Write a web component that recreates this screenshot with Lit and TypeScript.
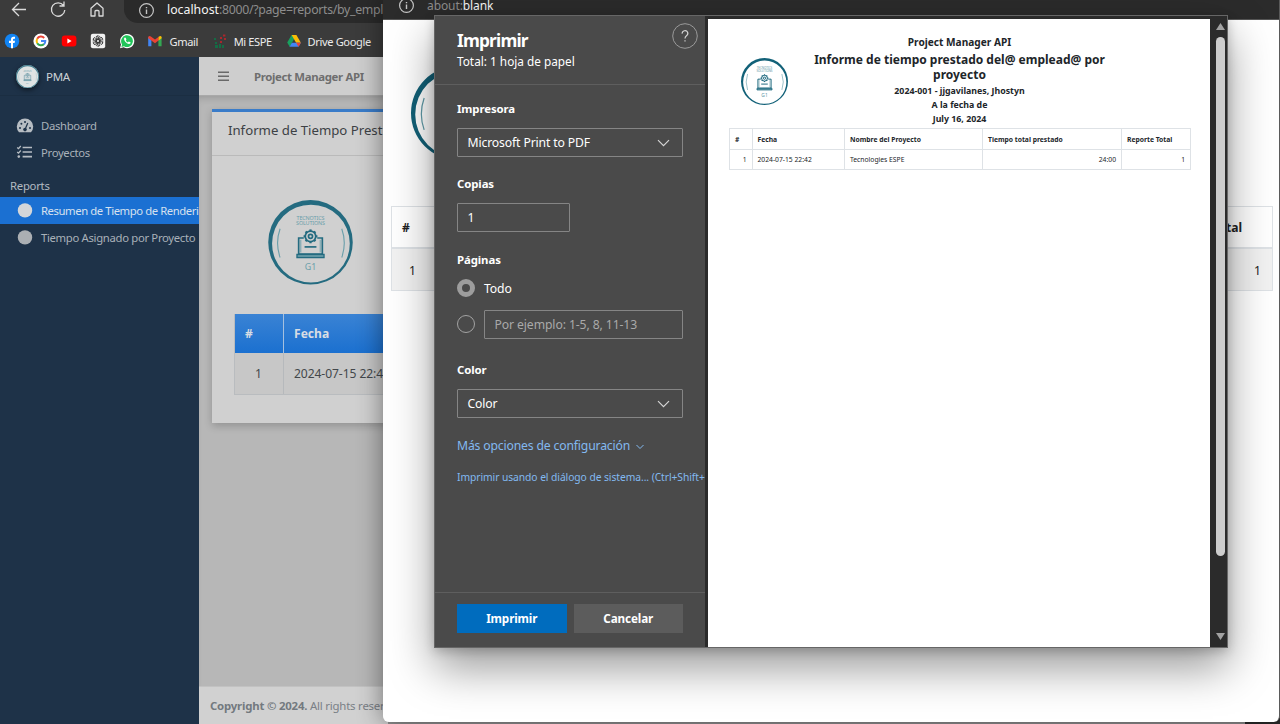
import { LitElement, html, svg, css } from "lit";
import { customElement } from "lit/decorators.js";

const base = css`
  :host { display: block; box-sizing: border-box; font-family: "Noto Sans", "Open Sans", sans-serif; }
  *, *::before, *::after { box-sizing: border-box; }
  svg { display: block; flex: none; }
  span, b { white-space: nowrap; }
`;

@customElement("team-logo")
class TeamLogo extends LitElement {
  static styles = css`
    :host { display: block; flex: none; }
    svg { display: block; width: 100%; height: 100%; }
    text { font-family: "Noto Sans", sans-serif; fill: #5f9aa7; }
  `;
  render() {
    const teeth = [0, 45, 90, 135, 180, 225, 270, 315];
    return html`<svg viewBox="0 0 100 100">
      <path fill="#126178" fill-rule="evenodd" d="M50 0a50 50 0 1 0 0 100a50 50 0 1 0 0-100M50.5 5.5a46 46 0 1 1 0 92a46 46 0 1 1 0-92"/>
      <text x="50" y="24" font-size="6.4" text-anchor="middle" textLength="33">TECNOTICS</text>
      <text x="50" y="30" font-size="6.4" text-anchor="middle" textLength="34">SOLUTIONS</text>
      <path d="M14 34Q8 51 14 68M87 34Q93 51 87 68" fill="none" stroke="#5f9aa7" stroke-width="1.3"/>
      <g fill="none" stroke="#126178" stroke-width="2">
        <path d="M42 45H36V64H64V45H58"/>
        <path d="M38.5 47V62M61.5 47V62" stroke="#6ba0ac" stroke-width="1.2"/>
        <path d="M34 64.5H66V68H34Z" fill="#6ba0ac" stroke-width="1.6"/>
        <path d="M43 55.5H57" stroke-width="2"/>
        <circle cx="50" cy="43" r="6.2"/><circle cx="50" cy="43" r="2.4"/>
        ${teeth.map((a) => svg`<path d="M50 36.8V34.8" stroke-width="2.6" transform="rotate(${a} 50 43)"/>`)}
      </g>
      <text x="50" y="83" font-size="10.5" text-anchor="middle">G1</text>
    </svg>`;
  }
}

@customElement("main-browser")
class MainBrowser extends LitElement {
  static styles = [base, css`
    :host { display: grid; grid-template-rows: 57px 1fr; background: #3b3b3b; overflow: hidden; }
    .chrome { display: grid; grid-template-rows: 25px 1fr; }
    .nav { display: flex; height: 24px; align-items: flex-start; padding-left: 11px; }
    .nav svg { margin-right: 23px; }
    .url { flex: 1; min-width: 0; height: 23px; margin-left: -4px; border-radius: 0 0 0 14px; background: #2a2a2a; display: flex; padding-left: 14px; }
    .url svg { margin: 2px 12px 0 0; }
    .url span { font-size: 12.3px; line-height: 20px; color: #8d8d8d; letter-spacing: -0.3px; }
    .url i { font-style: normal; color: #f4f4f4; letter-spacing: 0; }
    .marks { display: flex; align-items: center; gap: 12.7px; padding-left: 4px; height: 32px; color: #ececec; font-size: 11.1px; }
    .marks svg { width: 16px; height: 16px; }
    .mark { display: flex; align-items: center; gap: 6px; letter-spacing: -0.38px; }
    .mark + .mark { margin-left: 1px; }
    .page { display: grid; grid-template-columns: 199px 1fr; min-height: 0; }
    .side { background: #1e3248; color: #a9b1b9; overflow: hidden; font-size: 11.3px; letter-spacing: -0.32px; }
    .brand { display: flex; align-items: center; height: 39px; padding-left: 16px; gap: 7px; color: #ccd1d6; font-size: 11.5px; border-bottom: 1px solid #1b2e42; }
    .brand div { width: 23px; height: 23px; border-radius: 50%; background: #dfe3e3; box-shadow: 0 2px 5px #0008; }
    .brand team-logo { width: 23px; height: 23px; opacity: .75; }
    .items { padding-top: 16px; }
    .item { display: flex; height: 27px; align-items: center; gap: 7px; padding-left: 16px; }
    .item svg { width: 18px; height: 16px; }
    .head { height: 31px; padding: 10px 0 0 10px; line-height: 19px; color: #b3bac1; letter-spacing: -0.25px; }
    .on { background: #1b70d2; color: #d6e1ef; }
    .on span { letter-spacing: -0.42px; }
    .main { display: grid; grid-template-rows: 39px 1fr 38px; background: #b7b7b7; min-width: 0; overflow: hidden; }
    .top { display: flex; align-items: center; gap: 25px; padding-left: 19px; background: #cecece; border-bottom: 1px solid #a9a9a9; font-size: 11.4px; color: #6e6e6e; }
    .top b { letter-spacing: -0.34px; }
    .body { padding: 13px 0 0 13px; overflow: hidden; box-shadow: inset 0 6px 8px -5px #0003; }
    .card { width: 400px; height: 314px; background: #d0d0d0; border-top: 3px solid #3a7cc9; box-shadow: 0 3px 8px #0003; }
    .title { height: 44px; padding: 8px 0 0 16px; border-bottom: 1px solid #bababa; font-size: 13.2px; line-height: 20px; color: #3d4145; }
    .card team-logo { width: 85px; height: 84.5px; margin: 44px 0 0 56px; opacity: .9; }
    .table { display: grid; grid-template: 39px 41px / 49px 300px; margin: 29px 0 0 22px; border: 1px solid #b9bcbf; border-width: 0 0 1px 1px; color: #43474b; font-size: 12.1px; }
    .table > * { display: flex; align-items: center; padding-left: 10px; border-right: 1px solid #b6b9bc; }
    .table b { background: linear-gradient(#3a83d4, #1b70d0); border-color: #a5c0df; color: #d7dde4; }
    .table span { background: #c7c7c7; letter-spacing: -0.08px; }
    .table span.n { padding-left: 20px; }
    .foot { background: #d1d1d1; border-top: 1px solid #c2c2c2; padding: 10px 0 0 11px; font-size: 11.4px; line-height: 18px; color: #7a8086; letter-spacing: -0.2px; overflow: hidden; }
    .foot b { letter-spacing: -0.2px; color: #73797f; }
  `];
  render() {
    return html`
      <div class="chrome">
        <div class="nav">
          <svg width="16" height="18" fill="none" stroke="#dadada" stroke-width="1.3"><path d="M15 9.5H1.5M8 3L1.5 9.5L8 16"/></svg>
          <svg width="16" height="18" fill="none" stroke="#dadada" stroke-width="1.3"><path d="M13.5 5.5A6.7 6.7 0 1 0 14.8 10M14 1.5V6H9.5"/></svg>
          <svg width="16" height="18" fill="none" stroke="#dadada" stroke-width="1.3" stroke-linejoin="round"><path d="M2 8.2L8 3L14 8.2V16H10V11.5Q10 10.5 9 10.5H7Q6 10.5 6 11.5V16H2Z"/></svg>
          <div class="url">
            <svg width="17" height="17" fill="none" stroke="#c4c4c4" stroke-width="1.2"><circle cx="8.5" cy="8.5" r="6.9"/><path d="M8.5 7.5V12M8.5 5V6.3" stroke-width="1.4"/></svg>
            <span><i>localhost</i>:8000/?page=reports/by_empl</span>
          </div>
        </div>
        <div class="marks">
          <svg viewBox="0 0 16 16"><circle cx="8" cy="8" r="7.3" fill="#1284f3"/><path d="M7 15.3V9.9H5V7.8H7V6.4Q7 3.8 9.5 3.8H11V5.7H10Q9 5.7 9 6.7V7.8H11L10.6 9.9H9V15.3Z" fill="#fff"/></svg>
          <svg viewBox="0 0 16 16" fill="none" stroke-width="2"><circle cx="8" cy="8" r="7.6" fill="#fff"/><path d="M4.2 5.8A4.3 4.3 0 0 1 11.2 5" stroke="#ea4335"/><path d="M4.2 10.2A4.6 4.6 0 0 1 4.2 5.8" stroke="#fbbc05"/><path d="M11 11A4.4 4.4 0 0 1 4.2 10.2" stroke="#34a853"/><path d="M8 8H12.3Q12.3 10 11 11.2" stroke="#4285f4"/></svg>
          <svg viewBox="0 0 16 16"><rect x=".8" y="2.6" width="14.6" height="10.8" rx="3" fill="#f00"/><path d="M6.4 5.6V10.4L10.6 8Z" fill="#fff"/></svg>
          <svg viewBox="0 0 16 16"><rect x=".8" y=".8" width="14.4" height="14.4" rx="2" fill="#f2f2f2"/><g fill="none" stroke="#333" stroke-width=".75">${[0, 60, 120, 180, 240, 300].map((a) => svg`<path d="M8 6L9.8 7V11.2Q9.6 12.8 8 13.2M5.2 5.2V8L8 9.6M6 3.6Q8 2 10 3.6" transform="rotate(${a} 8 8)"/>`)}</g></svg>
          <svg viewBox="0 0 16 16"><path d="M1 15.3L2 11.6A7.1 7.1 0 1 1 4.7 14.3Z" fill="#fff"/><path d="M2.4 13.9L3.1 11.4A5.9 5.9 0 1 1 5 13.2Z" fill="#22c55a"/><path d="M5.8 4.6C4.6 5.4 4.8 7 6.5 9C8.4 11 10.4 11.7 11.5 10.2V9.3L9.7 8.5L8.9 9.4Q7.5 8.8 6.8 7.4L7.4 6.6L6.7 4.7Z" fill="#fff"/></svg>
          <div class="mark"><svg viewBox="0 0 16 16"><path d="M1.2 13.2V4L4.4 6.4V13.2Z" fill="#4285f4"/><path d="M11.4 13.2V6.4L14.6 4V13.2Z" fill="#34a853"/><path d="M1.2 4Q2.2 2 4.2 3.7L8 6.6L11.8 3.7V7.3L8 10.2L1.2 5.2Z" fill="#ea4335"/><path d="M11.6 3.8Q13.8 2 14.6 4V5.2L11.6 7.4Z" fill="#fbbc04"/></svg><span>Gmail</span></div>
          <div class="mark"><svg viewBox="0 0 16 16"><g fill="#a9272c"><rect x="8" y="4" width="2" height="2"/><rect x="11" y="1.5" width="2.4" height="2"/><rect x="12" y="5" width="2" height="2"/><rect x="8" y="8" width="2" height="2"/></g><g fill="#146c45"><rect x="2" y="5" width="2" height="2"/><rect x="3" y="9" width="2" height="2"/><rect x="3" y="12" width="3" height="3"/><rect x="7" y="11" width="2" height="4"/><rect x="10" y="12" width="2" height="3"/></g></svg><span>Mi ESPE</span></div>
          <div class="mark"><svg viewBox="0 0 16 16"><path d="M5.6 2H10.4L8 6.2L3.7 13.8L1.2 9.6Z" fill="#18a05e"/><path d="M10.4 2L14.9 9.7H10.1L5.6 2Z" fill="#fbbc05"/><path d="M14.9 9.7L12.5 13.8H3.5L5.9 9.7Z" fill="#4285f4"/><path d="M10.1 9.7H14.9L12.5 13.8Z" fill="#ea4335"/></svg><span>Drive Google</span></div>
        </div>
      </div>
      <div class="page">
        <div class="side">
          <div class="brand"><div><team-logo></team-logo></div><span>PMA</span></div>
          <div class="items">
            <div class="item"><svg viewBox="0 0 18 16"><path d="M3 14.2A8.2 8.2 0 1 1 15 14.2Z" fill="#b6bcc2"/><g fill="#1e3248"><circle cx="4" cy="10" r="1"/><circle cx="5.4" cy="5.8" r="1"/><circle cx="9" cy="4" r="1"/><circle cx="14" cy="10" r="1"/><circle cx="9" cy="11.6" r="1.8"/></g><path d="M9 11.5L11.8 5" stroke="#1e3248" stroke-width="1.2"/></svg><span>Dashboard</span></div>
            <div class="item"><svg viewBox="0 0 18 16" fill="none" stroke="#b6bcc2" stroke-width="1.7"><path d="M6.6 2.5H16M6.6 7H16M6.6 11.6H16"/><path d="M1.2 2.4L2.5 3.6L4.8 1M1.2 6.9L2.5 8.1L4.8 5.5" stroke-width="1.3"/><circle cx="2.8" cy="11.6" r="1.3" fill="#b6bcc2" stroke="none"/></svg><span>Proyectos</span></div>
            <div class="head">Reports</div>
            <div class="item on"><svg viewBox="0 0 18 16"><circle cx="9" cy="7.4" r="7.2" fill="#d4d6d9"/></svg><span>Resumen de Tiempo de Renderi</span></div>
            <div class="item"><svg viewBox="0 0 18 16"><circle cx="9" cy="7.4" r="7.2" fill="#abafb3"/></svg><span>Tiempo Asignado por Proyecto</span></div>
          </div>
        </div>
        <div class="main">
          <div class="top"><svg width="11" height="10" stroke="#696969" stroke-width="1.4"><path d="M0 1.2H11M0 5.2H11M0 9.2H11"/></svg><b>Project Manager API</b></div>
          <div class="body"><div class="card">
            <div class="title"><span>Informe de Tiempo Prest</span></div>
            <team-logo></team-logo>
            <div class="table"><b>#</b><b>Fecha</b><span class="n">1</span><span>2024-07-15 22:42</span></div>
          </div></div>
          <div class="foot"><span><b>Copyright © 2024.</b> All rights reser</span></div>
        </div>
      </div>`;
  }
}

@customElement("blank-window")
class BlankWindow extends LitElement {
  static styles = [base, css`
    :host { background: #fff; border-radius: 0 0 6px 6px; overflow: hidden; border-right: 1px solid #5a5a5a; }
    .bar { height: 20px; background: #2b2b2b; border-bottom: 1px solid #555; display: flex; padding-left: 15px; gap: 12px; font-size: 12px; line-height: 12px; letter-spacing: -0.09px; color: #8d8d8d; }
    .bar i { font-style: normal; color: #f4f4f4; }
    .bar svg { margin-top: -3px; }
    .doc { padding: 46px 6px 0 8px; color: #222; font-size: 12.1px; }
    team-logo { width: 94px; height: 94px; margin-left: 20px; }
    .row { display: flex; justify-content: space-between; align-items: center; height: 42px; padding: 0 30px 0 10px; border: 1px solid #dee2e6; }
    .first { margin-top: 46px; border-bottom-width: 2px; height: 43px; padding-top: 1px; }
    .data { height: 42px; padding: 1px 11px 0 17px; background: #f2f2f2; border-top: 0; }
  `];
  render() {
    return html`
      <div class="bar"><svg width="17" height="17" fill="none" stroke="#c4c4c4" stroke-width="1.2"><circle cx="8.5" cy="8.5" r="6.9"/><path d="M8.5 7.5V12M8.5 5V6.3" stroke-width="1.4"/></svg><span>about:<i>blank</i></span></div>
      <div class="doc"><team-logo></team-logo>
        <div class="row first"><b>#</b><b>Reporte Total</b></div>
        <div class="row data"><span>1</span><span>1</span></div>
      </div>`;
  }
}

@customElement("print-dialog")
class PrintDialog extends LitElement {
  static styles = [base, css`
    :host { display: grid; grid-template-columns: 269.5px 3.5px 502px 1fr; background: #2b2b2b; border: 1px solid #666; box-shadow: 0 20px 42px #0006, 0 3px 10px #0003; }
    .panel { display: flex; flex-direction: column; background: #4a4a4a; color: #fff; font-size: 12.2px; letter-spacing: -0.13px; overflow: hidden; }
    .head { display: flex; justify-content: space-between; height: 69px; padding: 7px 6.5px 0 22px; border-bottom: 1px solid #5e5e5e; }
    h1 { margin: 5px 0 0; font-size: 17.3px; line-height: 26px; letter-spacing: -0.8px; }
    .head span { display: block; margin-top: -1px; font-size: 11.8px; line-height: 16px; letter-spacing: 0; }
    .form { flex: 1; padding: 15px 0 0 22px; }
    label { display: block; height: 20px; font-weight: 700; font-size: 11.4px; line-height: 18px; letter-spacing: -0.1px; }
    .field { display: flex; align-items: center; justify-content: space-between; width: 226px; height: 29px; padding: 0 12px 0 9.5px; border: 1px solid #858585; border-radius: 1px; }
    .gap { margin: 8px 0 18px; }
    .short { width: 113px; margin-bottom: 19px; }
    .radio { display: flex; align-items: center; gap: 9px; height: 18px; }
    .all { margin: 8px 0 18px; }
    .some { margin-bottom: 28px; }
    .dot { width: 18px; height: 18px; border: 1px solid #a3a3a3; border-radius: 50%; }
    .sel { border: 5px solid #9d9d9d; }
    .range { width: 199px; color: #a9a9a9; letter-spacing: -0.1px; }
    .more { display: flex; align-items: center; gap: 6px; height: 20px; margin-top: -1px; color: #82b9f0; letter-spacing: -0.16px; }
    .more svg { margin-top: 3px; }
    .sys { margin-top: 13px; font-size: 10.3px; line-height: 18px; color: #82b9f0; letter-spacing: -0.07px; }
    .foot { display: flex; gap: 7px; height: 55px; padding: 10.5px 0 0 22px; border-top: 1px solid #5e5e5e; font-weight: 700; font-size: 11.7px; }
    .btn { width: 109.5px; height: 29px; display: grid; place-items: center; background: #5c5c5c; }
    .go { background: #006cbe; }
    .paper { grid-column: 3; margin-top: 3px; background: #fff; color: #212529; padding: 14px 19px 0 21px; }
    .top { display: grid; grid-template-columns: 47px 296px; column-gap: 24px; padding-left: 12px; height: 95px; }
    team-logo { width: 47px; height: 47px; margin-top: 25px; }
    .words { display: flex; flex-direction: column; align-items: center; margin: 1px 0 0 -1px; font-size: 8.8px; font-weight: 700; line-height: 14.3px; }
    .words .a { font-size: 10.15px; line-height: 17.6px; }
    .words .b { font-size: 12px; line-height: 15.6px; }
    .words .c { margin-top: 1px; }
    .grid { display: grid; grid-template: 21px 20px / 22.5px 92.5px 138px 139px 69px; border: 1px solid #dee2e6; border-width: 1px 0 0 1px; font-size: 6.75px; width: 462px; }
    .grid > * { padding: 0 5px; display: flex; align-items: center; border: 1px solid #dee2e6; border-width: 0 1px 1px 0; }
    .grid .r { justify-content: flex-end; }
    .scroll { display: flex; flex-direction: column; align-items: center; justify-content: space-between; padding: 7px 0 7px 3px; }
    .thumb { width: 9px; flex: 1; margin: 7px 0 77px; border-radius: 5px; background: #cdcdcd; }
  `];
  chev = html`<svg width="13" height="8" fill="none" stroke="#d5d5d5" stroke-width="1.2"><path d="M1 1.2L6.5 6.7L12 1.2"/></svg>`;
  render() {
    return html`
      <div class="panel">
        <div class="head"><div><h1>Imprimir</h1><span>Total: 1 hoja de papel</span></div>
          <svg width="26" height="26" fill="none" stroke="#9a9a9a"><circle cx="13" cy="13" r="12.3"/><path d="M10.2 10.6A2.8 2.8 0 1 1 14.5 12.8Q13 13.8 13 15.6M13 17.2V18.6" stroke="#d5d5d5" stroke-width="1.2"/></svg></div>
        <div class="form">
          <label>Impresora</label>
          <div class="field gap"><span>Microsoft Print to PDF</span>${this.chev}</div>
          <label>Copias</label>
          <div class="field gap short"><span>1</span></div>
          <label>Páginas</label>
          <div class="radio all"><div class="dot sel"></div><span>Todo</span></div>
          <div class="radio some"><div class="dot"></div><div class="field range"><span>Por ejemplo: 1-5, 8, 11-13</span></div></div>
          <label>Color</label>
          <div class="field gap"><span>Color</span>${this.chev}</div>
          <div class="more"><span>Más opciones de configuración</span><svg width="8" height="6" fill="none" stroke="#82b9f0"><path d="M.5 1L4 4.5L7.5 1"/></svg></div>
          <div class="sys"><span>Imprimir usando el diálogo de sistema... (Ctrl+Shift+</span></div>
        </div>
        <div class="foot"><div class="btn go">Imprimir</div><div class="btn">Cancelar</div></div>
      </div>
      <div class="paper">
        <div class="top"><team-logo></team-logo>
          <div class="words"><span class="a">Project Manager API</span><span class="b">Informe de tiempo prestado del@ emplead@ por</span><span class="b">proyecto</span><span class="c">2024-001 - jjgavilanes, Jhostyn</span><span>A la fecha de</span><span>July 16, 2024</span></div>
        </div>
        <div class="grid">
          <b>#</b><b>Fecha</b><b>Nombre del Proyecto</b><b>Tiempo total prestado</b><b>Reporte Total</b>
          <span class="r">1</span><span>2024-07-15 22:42</span><span>Tecnologies ESPE</span><span class="r">24:00</span><span class="r">1</span>
        </div>
      </div>
      <div class="scroll">
        <svg width="9" height="7" fill="#a2a2a2"><path d="M4.5 0L9 7H0Z"/></svg><div class="thumb"></div><svg width="9" height="7" fill="#a2a2a2"><path d="M4.5 7L9 0H0Z"/></svg>
      </div>`;
  }
}

@customElement("app-root")
class AppRoot extends LitElement {
  static styles = css`
    :host { display: block; position: relative; width: 1280px; height: 724px; overflow: hidden; background: linear-gradient(90deg, #929292 1245px, #2b2b2b 1245px); }
    main-browser { width: 388px; height: 724px; }
    .popup { position: absolute; left: 383px; top: 0; width: 897px; height: 721.5px; border-radius: 0 0 6px 6px; box-shadow: 0 0 26px #0007; }
    blank-window { height: 721.5px; }
    print-dialog { position: absolute; left: 434px; top: 15px; width: 794px; height: 633px; }
  `;
  render() {
    return html`<main-browser></main-browser><div class="popup"><blank-window></blank-window></div><print-dialog></print-dialog>`;
  }
}
